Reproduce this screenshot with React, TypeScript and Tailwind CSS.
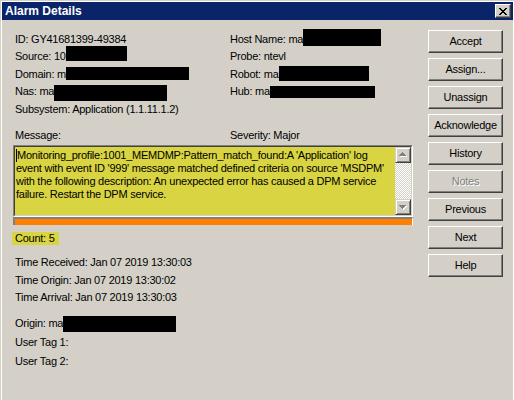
import React from "react";

function Redact({ outer, inner }: { outer: string; inner: string }) {
  return (
    <span className={"relative inline-block h-0 " + outer}>
      <span className={"absolute left-0 right-0 bg-black " + inner} />
    </span>
  );
}

function Btn({ label, disabled }: { label: string; disabled?: boolean }) {
  return (
    <button
      className={
        "block h-[23px] w-[75px] p-0 bg-[#D4D0C8] border border-t-white border-l-white border-r-[#404040] border-b-[#404040] shadow-[inset_-1px_-1px_#808080] text-[11px] leading-[21px] text-center " +
        (disabled ? "text-[#808080] [text-shadow:1px_1px_0_#ffffff]" : "text-black")
      }
    >
      {label}
    </button>
  );
}

function UpArrow() {
  return (
    <svg width="9" height="6" viewBox="0 0 9 6" shapeRendering="crispEdges">
      <g fill="#ffffff">
        <rect x="4" y="1" width="1" height="1" />
        <rect x="3" y="2" width="3" height="1" />
        <rect x="2" y="3" width="5" height="1" />
        <rect x="1" y="4" width="7" height="1" />
      </g>
      <g fill="#808080">
        <rect x="3" y="0" width="1" height="1" />
        <rect x="2" y="1" width="3" height="1" />
        <rect x="1" y="2" width="5" height="1" />
        <rect x="0" y="3" width="7" height="1" />
      </g>
    </svg>
  );
}

function DownArrow() {
  return (
    <svg width="9" height="6" viewBox="0 0 9 6" shapeRendering="crispEdges">
      <g fill="#ffffff">
        <rect x="1" y="1" width="7" height="1" />
        <rect x="2" y="2" width="5" height="1" />
        <rect x="3" y="3" width="3" height="1" />
        <rect x="4" y="4" width="1" height="1" />
      </g>
      <g fill="#808080">
        <rect x="0" y="0" width="7" height="1" />
        <rect x="1" y="1" width="5" height="1" />
        <rect x="2" y="2" width="3" height="1" />
        <rect x="3" y="3" width="1" height="1" />
      </g>
    </svg>
  );
}

function CloseGlyph() {
  return (
    <svg width="8" height="7" viewBox="0 0 8 7" shapeRendering="crispEdges" fill="#000">
      <rect x="0" y="0" width="2" height="1" />
      <rect x="6" y="0" width="2" height="1" />
      <rect x="1" y="1" width="2" height="1" />
      <rect x="5" y="1" width="2" height="1" />
      <rect x="2" y="2" width="4" height="1" />
      <rect x="3" y="3" width="2" height="1" />
      <rect x="2" y="4" width="4" height="1" />
      <rect x="1" y="5" width="2" height="1" />
      <rect x="5" y="5" width="2" height="1" />
      <rect x="0" y="6" width="2" height="1" />
      <rect x="6" y="6" width="2" height="1" />
    </svg>
  );
}

export default function App() {
  return (
    <div className="w-[514px] h-[400px] overflow-hidden bg-[#D4D0C8] font-['Liberation_Sans',Arial,sans-serif] text-[11px] tracking-[-0.25px] text-black">
      <div className="h-[399px] ml-[1px] mt-[1px] border-l border-t border-r border-white flex flex-col">
        {/* Title bar */}
        <div className="relative h-[18px] bg-[#0A246A] pl-[3px] flex items-center">
          <span className="text-white font-bold text-[12px] leading-[18px] tracking-normal">Alarm Details</span>
          <div className="absolute right-[2px] top-[2px] w-[16px] h-[14px] bg-[#D4D0C8] border border-t-white border-l-white border-r-[#404040] border-b-[#404040] shadow-[inset_-1px_-1px_#808080] flex items-center justify-center">
            <CloseGlyph />
          </div>
        </div>

        {/* Body */}
        <div className="flex pl-[13px]">
          {/* Left content */}
          <div className="w-[397px] pt-[10.5px]">
            <div className="grid grid-cols-[215px_1fr] leading-[17.5px] whitespace-nowrap">
              <div>ID: GY41681399-49384</div>
              <div>
                Host Name: ma
                <Redact outer="w-[78px]" inner="top-[-14px] h-[17px]" />
              </div>
              <div>
                Source: 10
                <Redact outer="w-[61px]" inner="top-[-14px] h-[15px]" />
              </div>
              <div>Probe: ntevl</div>
              <div>
                Domain: m
                <Redact outer="w-[123px]" inner="top-[-11px] h-[13px]" />
              </div>
              <div>
                Robot: ma
                <Redact outer="w-[90px]" inner="top-[-12px] h-[15px]" />
              </div>
              <div>
                Nas: ma
                <Redact outer="w-[113px]" inner="top-[-10px] h-[16px]" />
              </div>
              <div>
                Hub: ma
                <Redact outer="w-[105px]" inner="top-[-9px] h-[12px]" />
              </div>
              <div>Subsystem: Application (1.1.11.1.2)</div>
              <div />
            </div>

            <div className="mt-[8px] grid grid-cols-[215px_1fr] leading-[18px]">
              <div>Message:</div>
              <div>Severity: Major</div>
            </div>

            {/* Message box */}
            <div className="-ml-[2px] mt-[1px] w-[400px] h-[72px] border border-t-[#808080] border-l-[#808080] border-r-white border-b-white">
              <div className="h-full border border-t-[#404040] border-l-[#404040] border-r-[#D4D0C8] border-b-[#D4D0C8] flex bg-[#D9D441]">
                <div className="relative flex-1 overflow-hidden pl-[1px] pt-[2px] leading-[13px] whitespace-nowrap">
                  <span className="inline-block w-[1px] h-[13px] bg-black align-top" />
                  Monitoring_profile:1001_MEMDMP:Pattern_match_found:A 'Application' log
                  <br />
                  event with event ID '999' message matched defined criteria on source 'MSDPM'
                  <br />
                  with the following description: An unexpected error has caused a DPM service
                  <br />
                  failure. Restart the DPM service.
                </div>
                <div className="w-[16px] flex flex-col">
                  <div className="h-[16px] bg-[#D4D0C8] border border-t-[#D4D0C8] border-l-[#D4D0C8] border-r-[#404040] border-b-[#404040] shadow-[inset_1px_1px_#ffffff,inset_-1px_-1px_#808080] flex items-center justify-center pl-[1px]">
                    <UpArrow />
                  </div>
                  <div className="flex-1 bg-[repeating-conic-gradient(#D4D0C8_0_25%,#ffffff_0_50%)] bg-[length:2px_2px]" />
                  <div className="h-[16px] bg-[#D4D0C8] border border-t-[#D4D0C8] border-l-[#D4D0C8] border-r-[#404040] border-b-[#404040] shadow-[inset_1px_1px_#ffffff,inset_-1px_-1px_#808080] flex items-center justify-center pl-[1px] pt-[1px]">
                    <DownArrow />
                  </div>
                </div>
              </div>
            </div>

            {/* Orange severity bar */}
            <div className="-ml-[2px] w-[400px] h-[8px] border-t-2 border-l-2 border-t-[#808080] border-l-[#808080] border-r border-r-white bg-[#FF8000]" />

            <div className="mt-[7px] leading-[13px]">
              <span className="inline-block -ml-[3px] pl-[3px] w-[47px] h-[13px] bg-[#D9D441]">Count: 5</span>
            </div>

            <div className="mt-[9px] leading-[17.5px]">
              <div>Time Received: Jan 07 2019 13:30:03</div>
              <div>Time Origin: Jan 07 2019 13:30:02</div>
              <div>Time Arrival: Jan 07 2019 13:30:03</div>
            </div>

            <div className="mt-[7px] leading-[19px] whitespace-nowrap">
              <div>
                Origin: ma
                <Redact outer="w-[113px]" inner="top-[-11px] h-[16px]" />
              </div>
              <div>User Tag 1:</div>
              <div>User Tag 2:</div>
            </div>
          </div>

          {/* Buttons */}
          <div className="ml-[16px] w-[75px] pt-[10px] flex flex-col gap-[5px]">
            <Btn label="Accept" />
            <Btn label="Assign..." />
            <Btn label="Unassign" />
            <Btn label="Acknowledge" />
            <Btn label="History" />
            <Btn label="Notes" disabled />
            <Btn label="Previous" />
            <Btn label="Next" />
            <Btn label="Help" />
          </div>
        </div>
      </div>
    </div>
  );
}
